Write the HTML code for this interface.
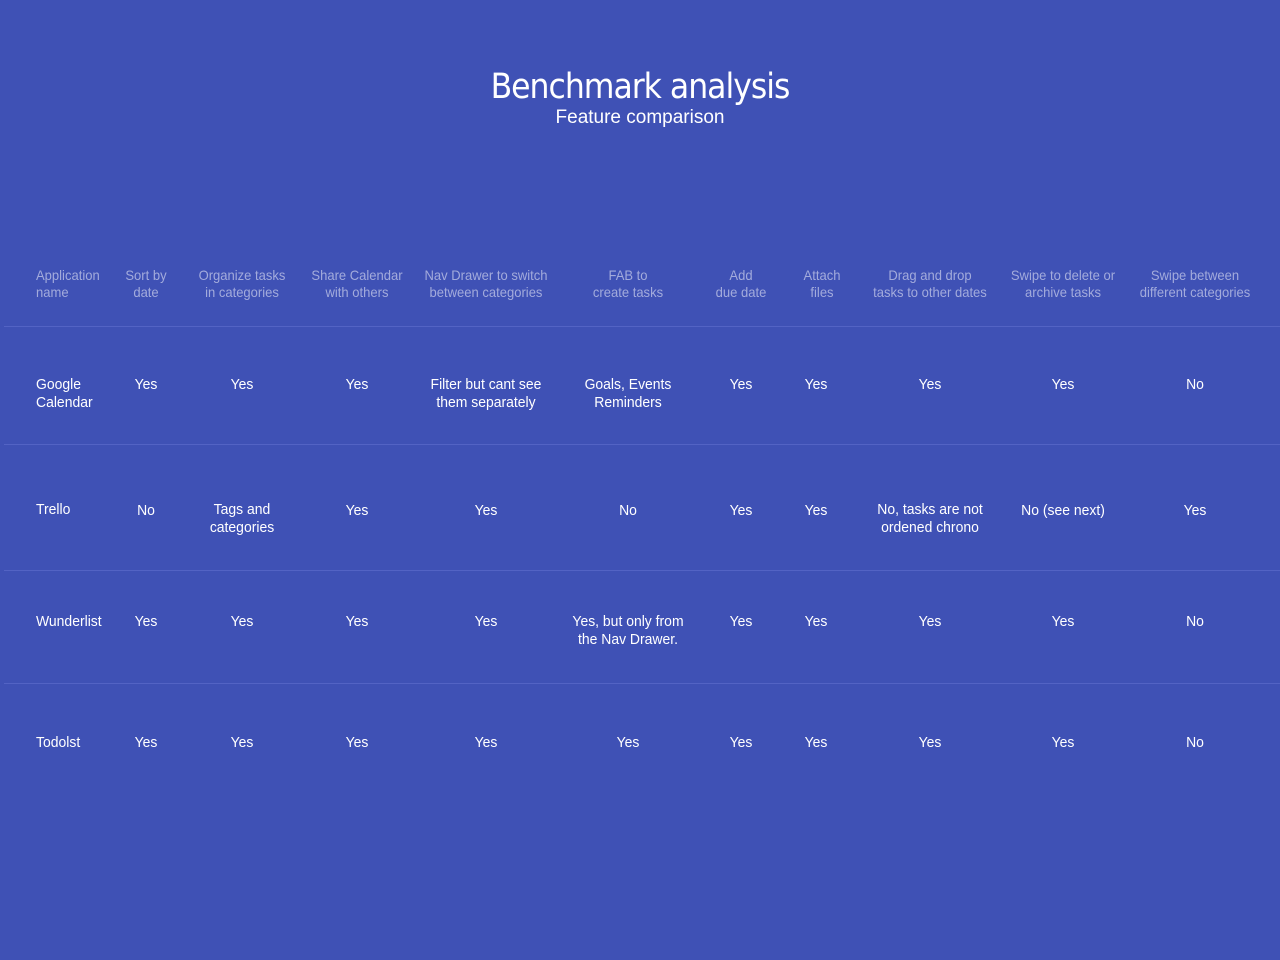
<!DOCTYPE html>
<html><head><meta charset="utf-8"><style>
html,body{margin:0;padding:0}
body{width:1280px;height:960px;background:#3f51b5;position:relative;overflow:hidden;font-family:"Liberation Sans Narrow","Liberation Sans",sans-serif;color:#fff}
.t{position:absolute;left:0;width:1280px;text-align:center}
.h,.v{position:absolute;width:200px;text-align:center;white-space:nowrap;transform:scaleX(0.93);transform-origin:50% 0}
.h{font-size:14px;line-height:17px;color:#a3abdc}
.v{font-size:15px;line-height:18px;color:#fff}
.l{text-align:left;transform-origin:0 0}
.d{position:absolute;left:4px;width:1276px;height:1px;background:#5363c4}
</style></head><body>
<div class="t" style="top:64px;font-size:35px;line-height:46px;font-family:'DejaVu Sans Condensed','Liberation Sans',sans-serif;letter-spacing:-1px">Benchmark analysis</div>
<div class="t" style="top:107px;font-size:19px;line-height:22px;font-family:'Liberation Sans',sans-serif">Feature comparison</div>

<div class="h l" style="left:36px;top:267px">Application<br>name</div>
<div class="h" style="left:46px;top:267px">Sort by<br>date</div>
<div class="h" style="left:142px;top:267px">Organize tasks<br>in categories</div>
<div class="h" style="left:257px;top:267px">Share Calendar<br>with others</div>
<div class="h" style="left:386px;top:267px">Nav Drawer to switch<br>between categories</div>
<div class="h" style="left:528px;top:267px">FAB to<br>create tasks</div>
<div class="h" style="left:641px;top:267px">Add<br>due date</div>
<div class="h" style="left:722px;top:267px">Attach<br>files</div>
<div class="h" style="left:830px;top:267px">Drag and drop<br>tasks to other dates</div>
<div class="h" style="left:963px;top:267px">Swipe to delete or<br>archive tasks</div>
<div class="h" style="left:1095px;top:267px">Swipe between<br>different categories</div>

<div class="d" style="top:326px"></div>
<div class="d" style="top:444px"></div>
<div class="d" style="top:570px"></div>
<div class="d" style="top:683px"></div>

<div class="v l" style="left:36px;top:376px">Google<br>Calendar</div>
<div class="v" style="left:46px;top:376px">Yes</div>
<div class="v" style="left:142px;top:376px">Yes</div>
<div class="v" style="left:257px;top:376px">Yes</div>
<div class="v" style="left:386px;top:376px">Filter but cant see<br>them separately</div>
<div class="v" style="left:528px;top:376px">Goals, Events<br>Reminders</div>
<div class="v" style="left:641px;top:376px">Yes</div>
<div class="v" style="left:716px;top:376px">Yes</div>
<div class="v" style="left:830px;top:376px">Yes</div>
<div class="v" style="left:963px;top:376px">Yes</div>
<div class="v" style="left:1095px;top:376px">No</div>

<div class="v l" style="left:36px;top:501px">Trello</div>
<div class="v" style="left:46px;top:502px">No</div>
<div class="v" style="left:142px;top:501px">Tags and<br>categories</div>
<div class="v" style="left:257px;top:502px">Yes</div>
<div class="v" style="left:386px;top:502px">Yes</div>
<div class="v" style="left:528px;top:502px">No</div>
<div class="v" style="left:641px;top:502px">Yes</div>
<div class="v" style="left:716px;top:502px">Yes</div>
<div class="v" style="left:830px;top:501px">No, tasks are not<br>ordened chrono</div>
<div class="v" style="left:963px;top:502px">No (see next)</div>
<div class="v" style="left:1095px;top:502px">Yes</div>

<div class="v l" style="left:36px;top:613px">Wunderlist</div>
<div class="v" style="left:46px;top:613px">Yes</div>
<div class="v" style="left:142px;top:613px">Yes</div>
<div class="v" style="left:257px;top:613px">Yes</div>
<div class="v" style="left:386px;top:613px">Yes</div>
<div class="v" style="left:528px;top:613px">Yes, but only from<br>the Nav Drawer.</div>
<div class="v" style="left:641px;top:613px">Yes</div>
<div class="v" style="left:716px;top:613px">Yes</div>
<div class="v" style="left:830px;top:613px">Yes</div>
<div class="v" style="left:963px;top:613px">Yes</div>
<div class="v" style="left:1095px;top:613px">No</div>

<div class="v l" style="left:36px;top:734px">Todolst</div>
<div class="v" style="left:46px;top:734px">Yes</div>
<div class="v" style="left:142px;top:734px">Yes</div>
<div class="v" style="left:257px;top:734px">Yes</div>
<div class="v" style="left:386px;top:734px">Yes</div>
<div class="v" style="left:528px;top:734px">Yes</div>
<div class="v" style="left:641px;top:734px">Yes</div>
<div class="v" style="left:716px;top:734px">Yes</div>
<div class="v" style="left:830px;top:734px">Yes</div>
<div class="v" style="left:963px;top:734px">Yes</div>
<div class="v" style="left:1095px;top:734px">No</div>
</body></html>
